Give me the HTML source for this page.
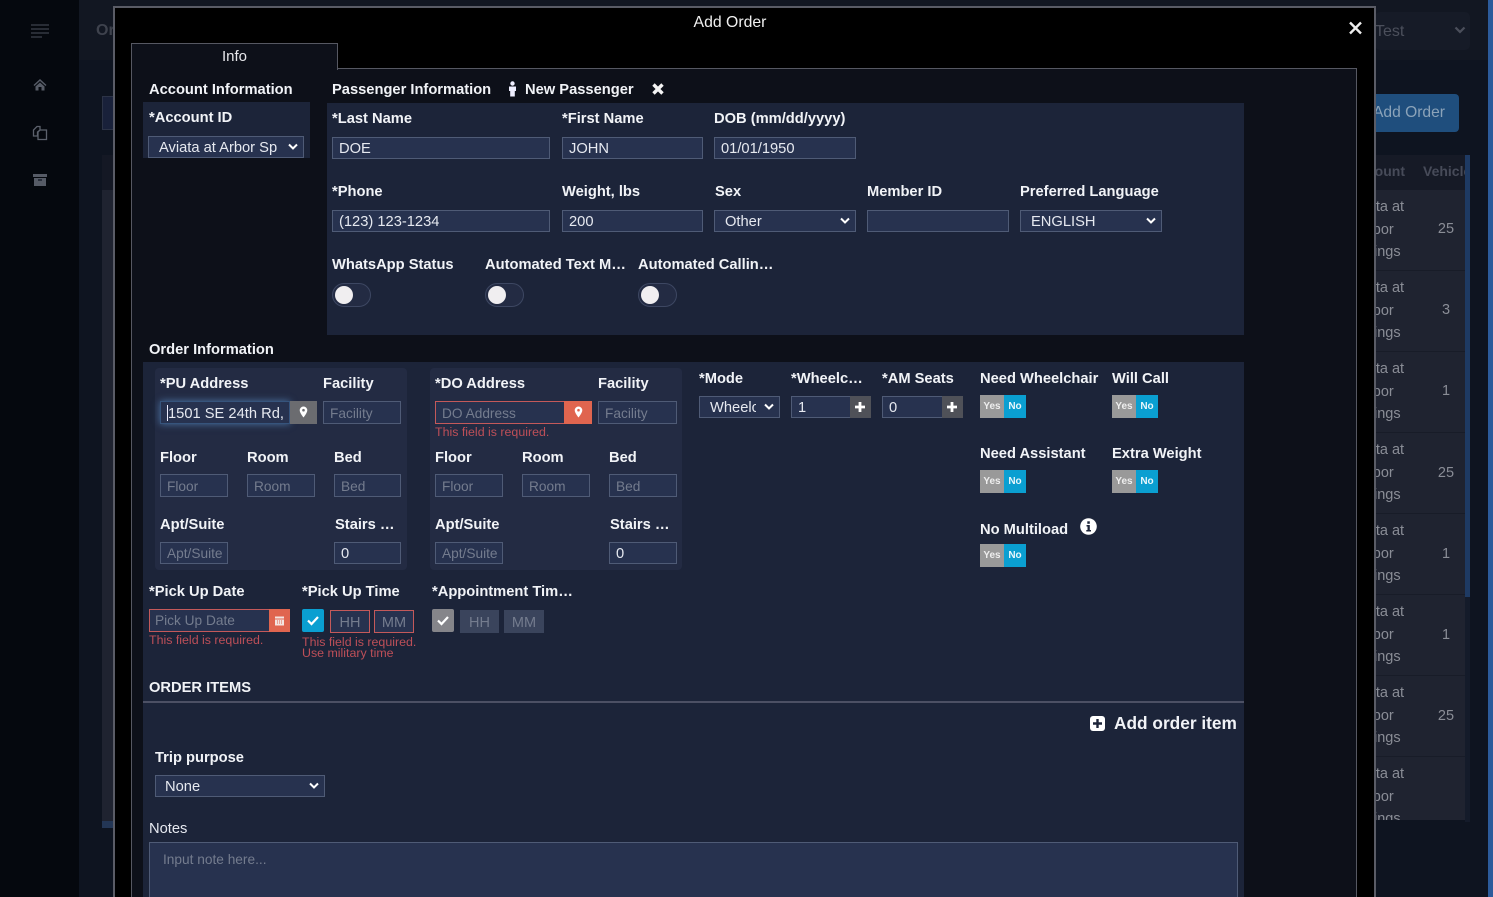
<!DOCTYPE html>
<html><head><meta charset="utf-8"><title>Add Order</title>
<style>
html,body{margin:0;padding:0;width:1493px;height:897px;overflow:hidden;background:#0e1420;font-family:"Liberation Sans",Arial,sans-serif}
div,span,svg{position:absolute;box-sizing:border-box}
.l{font:bold 14.7px/20px "Liberation Sans",Arial,sans-serif;color:#f1f3f7;white-space:nowrap}
.i{height:22px;border:1px solid #4f5b76;background:#27324f;color:#e6e9f0;font:14.7px/22px "Liberation Sans",Arial,sans-serif;padding-left:6px;white-space:nowrap;overflow:hidden}
.p{color:#747c8e;font-size:13.7px}
.m{line-height:24px}
.e{font:12.4px/11px "Liberation Sans",Arial,sans-serif;color:#bd4f58;white-space:nowrap}
.c{position:absolute;right:5px;top:6px;width:10px;height:8px}
.yes{width:24px;height:23px;background:#999;color:#eee;font:bold 10px/23px "Liberation Sans",Arial,sans-serif;text-align:center}
.no{width:22px;height:23px;background:#0a9fd1;color:#e8f6fb;font:bold 10px/23px "Liberation Sans",Arial,sans-serif;text-align:center}
.sw{width:39px;height:24px;border:1px solid #3d4762;border-radius:12px;background:#232b43}
.sw i{position:absolute;left:2px;top:2px;width:18px;height:18px;border-radius:50%;background:#f0eef0}
.t{color:#8a8d96;font:14.5px/22.5px "Liberation Sans",Arial,sans-serif;white-space:nowrap;left:-49px;width:100px;text-align:center}
.h{color:#474b59;font:bold 14px/18px "Liberation Sans",Arial,sans-serif;white-space:nowrap}
.v{color:#8a8d96;font:14.5px/18px "Liberation Sans",Arial,sans-serif;left:1426px;width:40px;text-align:center}
.pl{background:#4f5158;color:#fff;width:21px;height:22px}
</style></head><body>
<div style="left:0;top:0;width:1493px;height:897px;overflow:hidden;background:#0e1420">
<!-- background page -->
<div style="left:0;top:0;width:79px;height:897px;background:#05080e"></div>
<div style="left:79px;top:0;width:1409px;height:60px;background:#121722"></div>
<div style="left:1488px;top:0;width:5px;height:897px;background:#2c5b9b"></div>
<svg style="left:30px;top:24px" width="20" height="15" viewBox="0 0 20 15"><path d="M1 1h18M1 5h18M1 9h18M1 13h11" stroke="#4c505c" stroke-width="1" fill="none"/></svg>
<svg style="left:33px;top:78px" width="14" height="13" viewBox="0 0 14 13"><path d="M7 1L0.5 7l1 1L7 3l5.500 5 1-1zM2.500 8.500V12.500H5.500V9H8.500V12.500H11.500V8.500L7 4.500z" fill="#565b66"/></svg>
<svg style="left:32px;top:125px" width="16" height="16" viewBox="0 0 16 16"><path d="M5 1.500H8V5L5.500 7V11H1.500V5zM8 5H14.500V14.500H6V7z" fill="none" stroke="#5c616c" stroke-width="1.300"/></svg>
<svg style="left:33px;top:173px" width="14" height="14" viewBox="0 0 14 14"><path d="M0 1H14V4H0zM1 5H13V13H1z" fill="#565b66"/><path d="M5 7H9" stroke="#0e1420" stroke-width="1.200"/></svg>
<div style="left:96px;top:22px;font:bold 16px/18px 'Liberation Sans',sans-serif;color:#3e424d;white-space:nowrap">Orders</div>
<div style="left:102px;top:96px;width:40px;height:34px;border:1px solid #2c3346;background:#19213a"></div>
<div style="left:102px;top:155px;width:40px;height:35px;background:#141824"></div>
<div style="left:102px;top:190px;width:40px;height:631px;background:#1f2330"></div>
<div style="left:102px;top:821px;width:40px;height:7px;background:#233655"></div>
<div style="left:1375px;top:12px;width:95px;height:38px;background:#161b27;border-radius:5px"></div>
<div style="left:1375px;top:23px;font:16px/18px 'Liberation Sans',sans-serif;color:#4b4f5b">Test</div>
<svg style="left:1454px;top:26px" width="12" height="8" viewBox="0 0 12 8"><path d="M1.500 1.500L6 6l4.500-4.500" stroke="#4b4f5b" stroke-width="2.200" fill="none"/></svg>
<div style="left:1340px;top:94px;width:119px;height:38px;background:#1f4e7d;border-radius:4px"></div>
<div style="left:1373px;top:103px;font:15.6px/19px 'Liberation Sans',sans-serif;color:#8ba3b9;white-space:nowrap">Add Order</div>
<div style="left:1375px;top:155px;width:90px;height:35px;background:#161a26"></div>
<div style="left:1375px;top:190px;width:90px;height:630px;background:#1f2330"></div>
<div style="left:1465px;top:155px;width:5px;height:442px;background:#1e3a63"></div>
<div style="left:1465px;top:597px;width:5px;height:225px;background:#141b2a"></div>
<div class="h" style="left:1349px;top:162px">Account</div><div class="h" style="left:1423px;top:162px;width:42px;overflow:hidden">Vehicle</div>
<div style="left:1375px;top:270px;width:90px;height:1px;background:#181c28"></div>
<div style="left:1375px;top:351px;width:90px;height:1px;background:#181c28"></div>
<div style="left:1375px;top:432px;width:90px;height:1px;background:#181c28"></div>
<div style="left:1375px;top:513px;width:90px;height:1px;background:#181c28"></div>
<div style="left:1375px;top:594px;width:90px;height:1px;background:#181c28"></div>
<div style="left:1375px;top:675px;width:90px;height:1px;background:#181c28"></div>
<div style="left:1375px;top:756px;width:90px;height:1px;background:#181c28"></div>
<div style="left:1375px;top:190px;width:90px;height:630px;overflow:hidden">
<div class="t" style="top:6px">Aviata at<br>Arbor<br>Springs</div>
<div class="t" style="top:87px">Aviata at<br>Arbor<br>Springs</div>
<div class="t" style="top:168px">Aviata at<br>Arbor<br>Springs</div>
<div class="t" style="top:249px">Aviata at<br>Arbor<br>Springs</div>
<div class="t" style="top:330px">Aviata at<br>Arbor<br>Springs</div>
<div class="t" style="top:411px">Aviata at<br>Arbor<br>Springs</div>
<div class="t" style="top:492px">Aviata at<br>Arbor<br>Springs</div>
<div class="t" style="top:573px">Aviata at<br>Arbor<br>Springs</div>
</div>
<div class="v" style="top:220px">25</div><div class="v" style="top:301px">3</div><div class="v" style="top:382px">1</div><div class="v" style="top:464px">25</div><div class="v" style="top:545px">1</div><div class="v" style="top:626px">1</div><div class="v" style="top:707px">25</div>

<!-- modal -->
<div style="left:113px;top:6px;width:1263px;height:900px;background:#000;border:2px solid #5a5c66"></div>
<div style="left:115px;top:14px;width:1230px;text-align:center;font:15.8px/18px 'Liberation Sans',sans-serif;color:#f0f0f0">Add Order</div>
<svg style="left:1348px;top:20px" width="15" height="16" viewBox="0 0 15 16"><path d="M2 2.500l11 11M13 2.500l-11 11" stroke="#eeeeee" stroke-width="2.400"/></svg>
<div style="left:131px;top:68px;width:1226px;height:840px;background:#0d1019;border:1px solid #565862"></div>
<div style="left:131px;top:43px;width:207px;height:27px;background:#0d1019;border:1px solid #565862;border-bottom:0;text-align:center;font:15px/26px 'Liberation Sans',sans-serif;color:#e6e6ea">Info</div>

<div class="l" style="left:149px;top:80px">Account Information</div>
<div style="left:143px;top:102px;width:167px;height:56px;background:#1c2439"></div>
<div class="l" style="left:149px;top:108px">*Account ID</div>
<div class="i" style="left:148px;top:136px;width:156px;padding-left:10px"><span style="position:static;display:block;width:119px;overflow:hidden">Aviata at Arbor Springs</span><svg class="c" viewBox="0 0 10 8"><path d="M1 1.500l4 4 4-4" stroke="#fff" stroke-width="2" fill="none"/></svg></div>

<div class="l" style="left:332px;top:80px">Passenger Information</div>
<svg style="left:507px;top:81px" width="11" height="16" viewBox="0 0 11 16"><circle cx="5.500" cy="2.500" r="2.200" fill="#eef"/><path d="M2 5.500H9V10H7.800V15.500H3.200V10H2z" fill="#eef"/></svg>
<div class="l" style="left:525px;top:80px">New Passenger</div>
<svg style="left:651px;top:82px" width="14" height="14" viewBox="0 0 14 14"><path d="M2.500 2.500l9 9M11.500 2.500l-9 9" stroke="#f4f4f4" stroke-width="3.400"/></svg>
<div style="left:327px;top:103px;width:917px;height:232px;background:#1c2439"></div>
<div class="l" style="left:332px;top:109px">*Last Name</div>
<div class="l" style="left:562px;top:109px">*First Name</div>
<div class="l" style="left:714px;top:109px">DOB (mm/dd/yyyy)</div>
<div class="i" style="left:332px;top:137px;width:218px">DOE</div>
<div class="i" style="left:562px;top:137px;width:141px">JOHN</div>
<div class="i" style="left:714px;top:137px;width:142px">01/01/1950</div>
<div class="l" style="left:332px;top:182px">*Phone</div>
<div class="l" style="left:562px;top:182px">Weight, lbs</div>
<div class="l" style="left:715px;top:182px">Sex</div>
<div class="l" style="left:867px;top:182px">Member ID</div>
<div class="l" style="left:1020px;top:182px">Preferred Language</div>
<div class="i" style="left:332px;top:210px;width:218px">(123) 123-1234</div>
<div class="i" style="left:562px;top:210px;width:141px">200</div>
<div class="i" style="left:714px;top:210px;width:142px;padding-left:10px">Other<svg class="c" viewBox="0 0 10 8"><path d="M1 1.500l4 4 4-4" stroke="#fff" stroke-width="2" fill="none"/></svg></div>
<div class="i" style="left:867px;top:210px;width:142px"></div>
<div class="i" style="left:1020px;top:210px;width:142px;padding-left:10px">ENGLISH<svg class="c" viewBox="0 0 10 8"><path d="M1 1.500l4 4 4-4" stroke="#fff" stroke-width="2" fill="none"/></svg></div>
<div class="l" style="left:332px;top:255px">WhatsApp Status</div>
<div class="l" style="left:485px;top:255px">Automated Text M…</div>
<div class="l" style="left:638px;top:255px">Automated Callin…</div>
<div class="sw" style="left:332px;top:283px"><i></i></div>
<div class="sw" style="left:485px;top:283px"><i></i></div>
<div class="sw" style="left:638px;top:283px"><i></i></div>

<div class="l" style="left:149px;top:340px">Order Information</div>
<div style="left:143px;top:362px;width:1101px;height:540px;background:#1c2439"></div>

<!-- PU card -->
<div style="left:155px;top:368px;width:252px;height:202px;background:#232b43;border-radius:4px"></div>
<div class="l" style="left:160px;top:374px">*PU Address</div>
<div class="l" style="left:323px;top:374px">Facility</div>
<div class="i" style="left:160px;top:401px;width:130px;height:23px;border-color:#36547c;box-shadow:0 0 7px rgba(90,143,200,.7);padding-left:7px;line-height:24px;z-index:1">1501 SE 24th Rd, FL<span style="left:6px;top:3px;width:1px;height:16px;background:#eef"></span></div>
<div style="left:290px;top:401px;width:27px;height:23px;background:#6b6c70;z-index:2"><svg style="left:9px;top:5px" width="9" height="12" viewBox="0 0 9 12"><path d="M4.500 0.500A3.800 3.800 0 0 0 .7 4.300C.7 7 4.500 11.500 4.500 11.500S8.300 7 8.300 4.300A3.800 3.800 0 0 0 4.500 .5z" fill="#fff"/><circle cx="4.500" cy="4.200" r="1.300" fill="#6b6c70"/></svg></div>
<div class="i p m" style="left:323px;top:401px;width:78px;height:23px">Facility</div>
<div class="l" style="left:160px;top:448px">Floor</div><div class="l" style="left:247px;top:448px">Room</div><div class="l" style="left:334px;top:448px">Bed</div>
<div class="i p m" style="left:160px;top:474px;width:68px;height:23px">Floor</div>
<div class="i p m" style="left:247px;top:474px;width:68px;height:23px">Room</div>
<div class="i p m" style="left:334px;top:474px;width:67px;height:23px">Bed</div>
<div class="l" style="left:160px;top:515px">Apt/Suite</div><div class="l" style="left:335px;top:515px">Stairs …</div>
<div class="i p" style="left:160px;top:542px;width:68px">Apt/Suite</div>
<div class="i" style="left:334px;top:542px;width:67px">0</div>

<!-- DO card -->
<div style="left:430px;top:368px;width:252px;height:202px;background:#232b43;border-radius:4px"></div>
<div class="l" style="left:435px;top:374px">*DO Address</div>
<div class="l" style="left:598px;top:374px">Facility</div>
<div class="i p m" style="left:435px;top:401px;width:130px;height:23px;border-color:#c4595a">DO Address</div>
<div style="left:564px;top:401px;width:28px;height:23px;background:#e0654f"><svg style="left:10px;top:5px" width="9" height="12" viewBox="0 0 9 12"><path d="M4.500 0.500A3.800 3.800 0 0 0 .7 4.300C.7 7 4.500 11.500 4.500 11.500S8.300 7 8.300 4.300A3.800 3.800 0 0 0 4.500 .5z" fill="#fff"/><circle cx="4.500" cy="4.200" r="1.300" fill="#e0654f"/></svg></div>
<div class="i p m" style="left:598px;top:401px;width:79px;height:23px">Facility</div>
<div class="e" style="left:435px;top:427px">This field is required.</div>
<div class="l" style="left:435px;top:448px">Floor</div><div class="l" style="left:522px;top:448px">Room</div><div class="l" style="left:609px;top:448px">Bed</div>
<div class="i p m" style="left:435px;top:474px;width:68px;height:23px">Floor</div>
<div class="i p m" style="left:522px;top:474px;width:68px;height:23px">Room</div>
<div class="i p m" style="left:609px;top:474px;width:68px;height:23px">Bed</div>
<div class="l" style="left:435px;top:515px">Apt/Suite</div><div class="l" style="left:610px;top:515px">Stairs …</div>
<div class="i p" style="left:435px;top:542px;width:68px">Apt/Suite</div>
<div class="i" style="left:609px;top:542px;width:68px">0</div>

<!-- mode etc -->
<div class="l" style="left:699px;top:369px">*Mode</div>
<div class="l" style="left:791px;top:369px">*Wheelc…</div>
<div class="l" style="left:882px;top:369px">*AM Seats</div>
<div class="i" style="left:699px;top:396px;width:81px;padding-left:10px"><span style="position:static;display:block;width:46px;overflow:hidden">Wheelchair</span><svg class="c" viewBox="0 0 10 8"><path d="M1 1.500l4 4 4-4" stroke="#fff" stroke-width="2" fill="none"/></svg></div>
<div class="i" style="left:791px;top:396px;width:60px">1</div>
<div class="pl" style="left:850px;top:396px"><svg style="left:4px;top:5px" width="12" height="12" viewBox="0 0 12 12"><path d="M6 1v10M1 6h10" stroke="#fff" stroke-width="2.800"/></svg></div>
<div class="i" style="left:882px;top:396px;width:61px">0</div>
<div class="pl" style="left:942px;top:396px"><svg style="left:4px;top:5px" width="12" height="12" viewBox="0 0 12 12"><path d="M6 1v10M1 6h10" stroke="#fff" stroke-width="2.800"/></svg></div>

<div class="l" style="left:980px;top:369px">Need Wheelchair</div>
<div class="l" style="left:1112px;top:369px">Will Call</div>
<div class="yes" style="left:980px;top:395px">Yes</div><div class="no" style="left:1004px;top:395px">No</div>
<div class="yes" style="left:1112px;top:395px">Yes</div><div class="no" style="left:1136px;top:395px">No</div>
<div class="l" style="left:980px;top:444px">Need Assistant</div>
<div class="l" style="left:1112px;top:444px">Extra Weight</div>
<div class="yes" style="left:980px;top:470px">Yes</div><div class="no" style="left:1004px;top:470px">No</div>
<div class="yes" style="left:1112px;top:470px">Yes</div><div class="no" style="left:1136px;top:470px">No</div>
<div class="l" style="left:980px;top:520px">No Multiload</div>
<svg style="left:1080px;top:518px" width="17" height="17" viewBox="0 0 17 17"><circle cx="8.500" cy="8.500" r="8.300" fill="#fff"/><rect x="7.300" y="3.300" width="2.500" height="2.500" fill="#1c2439"/><path d="M6.500 7H9.800V12H11V13.500H6.300V12H7.500V8.500H6.500z" fill="#1c2439"/></svg>
<div class="yes" style="left:980px;top:544px">Yes</div><div class="no" style="left:1004px;top:544px">No</div>

<!-- dates -->
<div class="l" style="left:149px;top:582px">*Pick Up Date</div>
<div class="l" style="left:302px;top:582px">*Pick Up Time</div>
<div class="l" style="left:432px;top:582px">*Appointment Tim…</div>
<div class="i p" style="left:149px;top:609px;width:121px;height:23px;border-color:#c4595a;padding-left:5px">Pick Up Date</div>
<div style="left:269px;top:609px;width:21px;height:23px;background:#e0654f"><svg style="left:5px;top:6px" width="11" height="11" viewBox="0 0 11 11"><path d="M1 1.500H10V10.500H1z" fill="#f3e4e0"/><path d="M1 4H10" stroke="#e0654f"/><path d="M3 6h1M5 6h1M7 6h1M3 8h1M5 8h1M7 8h1" stroke="#e0654f"/></svg></div>
<div class="e" style="left:149px;top:635px">This field is required.</div>
<div style="left:302px;top:609px;width:22px;height:23px;background:#0a9fd1;border-radius:2px"><svg style="left:4px;top:6px" width="14" height="11" viewBox="0 0 14 11"><path d="M2 5.500l3.500 3.500L12 2" stroke="#fff" stroke-width="2.200" fill="none"/></svg></div>
<div class="i p" style="left:330px;top:610px;width:40px;height:23px;border-color:#c4595a;text-align:center;padding:0;line-height:24px;font-size:14.5px">HH</div>
<div class="i p" style="left:374px;top:610px;width:40px;height:23px;border-color:#c4595a;text-align:center;padding:0;line-height:24px;font-size:14.5px">MM</div>
<div class="e" style="left:302px;top:637px">This field is required.<br>Use military time</div>
<div style="left:432px;top:609px;width:22px;height:23px;background:#85858a;border-radius:2px"><svg style="left:4px;top:6px" width="14" height="11" viewBox="0 0 14 11"><path d="M2 5.500l3.500 3.500L12 2" stroke="#fff" stroke-width="2.200" fill="none"/></svg></div>
<div class="i p" style="left:460px;top:610px;width:39px;height:23px;background:#3a445c;border-color:#3a445c;text-align:center;padding:0;line-height:24px;font-size:14.5px">HH</div>
<div class="i p" style="left:504px;top:610px;width:40px;height:23px;background:#3a445c;border-color:#3a445c;text-align:center;padding:0;line-height:24px;font-size:14.5px">MM</div>

<div class="l" style="left:149px;top:678px">ORDER ITEMS</div>
<div style="left:143px;top:701px;width:1101px;height:2px;background:#4c5064"></div>
<svg style="left:1090px;top:716px" width="15" height="15" viewBox="0 0 15 15"><rect width="15" height="15" rx="3" fill="#fff"/><path d="M7.500 3v9M3 7.500h9" stroke="#1c2439" stroke-width="2.400"/></svg>
<div style="left:1114px;top:713px;font:bold 17.3px/20px 'Liberation Sans',sans-serif;color:#f1f3f7;white-space:nowrap">Add order item</div>
<div class="l" style="left:155px;top:748px">Trip purpose</div>
<div class="i" style="left:155px;top:775px;width:170px;padding-left:9px">None<svg class="c" viewBox="0 0 10 8"><path d="M1 1.500l4 4 4-4" stroke="#fff" stroke-width="2" fill="none"/></svg></div>
<div style="left:149px;top:820px;font:14.7px/18px 'Liberation Sans',sans-serif;color:#e6e9f0">Notes</div>
<div class="i p" style="left:149px;top:842px;width:1089px;height:80px;padding:8px 0 0 13px;line-height:18px">Input note here...</div>
</div>
</body></html>
